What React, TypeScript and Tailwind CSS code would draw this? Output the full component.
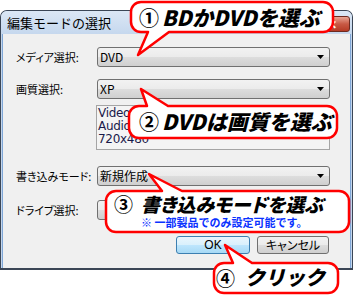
import React from "react";

const bubbles = [
  // ① top callout, tail points down-left
  "M141,2 H323 A10,10 0 0 1 333,12 V22 A10,10 0 0 1 323,32 H169 L138,55 L148,32 H141 A10,10 0 0 1 131,22 V12 A10,10 0 0 1 141,2 Z",
  // ② tail points up-left
  "M139,106 H147 L141,89 L168,106 H327 A10,10 0 0 1 337,116 V128 A10,10 0 0 1 327,138 H139 A10,10 0 0 1 129,128 V116 A10,10 0 0 1 139,106 Z",
  // ③
  "M116,191 H162 L149,174 L182,191 H339 A10,10 0 0 1 349,201 V222 A10,10 0 0 1 339,232 H116 A10,10 0 0 1 106,222 V201 A10,10 0 0 1 116,191 Z",
  // ④
  "M224,263 H233 L225,245 L252,263 H328 A10,10 0 0 1 338,273 V283 A10,10 0 0 1 328,293 H224 A10,10 0 0 1 214,283 V273 A10,10 0 0 1 224,263 Z",
];

function Combo({ value = "" }: { value?: string }) {
  return (
    <div className="relative h-[20px] w-[233px] rounded-[3px] border border-[#707070] bg-[linear-gradient(#f2f2f2_0%,#ebebeb_50%,#dddddd_51%,#cfcfcf_100%)] flex items-center pl-[2px] text-[12px] text-black">
      <span className="leading-none">{value}</span>
      {/* drop-down arrow */}
      <svg className="absolute right-[5px] top-[7px]" width="7" height="4" viewBox="0 0 7 4">
        <path d="M0 0 H7 L3.5 4 Z" fill="#000" />
      </svg>
    </div>
  );
}

function Row({ label, children }: { label: string; children: React.ReactNode }) {
  return (
    <div className="flex items-center">
      <div className="w-[81px] shrink-0 whitespace-nowrap text-[11px] leading-none text-black [font-feature-settings:'palt']">
        {label}
      </div>
      {children}
    </div>
  );
}

export default function App() {
  return (
    <div className="relative w-[353px] h-[295px] overflow-hidden bg-white font-['Noto_Sans_CJK_JP',sans-serif]">
      <div className="pt-[10px]">
        {/* window frame */}
        <div className="h-[260px] w-[353px] rounded-t-[7px] border border-b-2 border-[#3b4656] bg-[#c4d6ec] flex flex-col">
          {/* title bar */}
          <div className="h-[23px] flex items-center justify-between pl-[6px] pr-[2px] rounded-t-[6px] bg-[linear-gradient(#dbe7f5,#c6d8ee)]">
            <span className="text-[13px] leading-none text-black">編集モードの選択</span>
            <div className="h-[16px] w-[36px] mt-[3px] rounded-[3px] border border-[#6d2a20] bg-[linear-gradient(#e8a493,#c85a45_50%,#b53b25)] flex items-center justify-center">
              <span className="text-white text-[12px] font-bold leading-none">✕</span>
            </div>
          </div>
          {/* client area */}
          <div className="flex-1 mx-[1px] border-x border-[#7fa6d6] bg-[#f0f0f0] pl-[13px] pt-[13px] flex flex-col">
            <Row label="メディア選択:">
              <Combo value="DVD" />
            </Row>
            <div className="mt-[12px]">
              <Row label="画質選択:">
                <Combo value="XP" />
              </Row>
            </div>
            <div className="mt-[6px] ml-[80px] h-[45px] w-[234px] border border-[#a5a5a5] bg-[#f4f4f4] pl-[1px] pt-[1px] text-[12px] leading-[13px] text-[#1a1a4a] font-['DejaVu_Sans',sans-serif] tracking-[-0.3px]">
              <div>Video :</div>
              <div>Audio :</div>
              <div>720x480</div>
            </div>
            <div className="mt-[16px]">
              <Row label="書き込みモード:">
                <Combo value="新規作成" />
              </Row>
            </div>
            <div className="mt-[14px]">
              <Row label="ドライブ選択:">
                <Combo />
              </Row>
            </div>
            <div className="mt-[16px] pl-[160px] flex gap-[7px]">
              <div className="h-[18px] w-[74px] rounded-[3px] border border-[#3c7fb1] bg-[linear-gradient(#eaf6fd,#d9f0fc_50%,#bee6fd_51%,#a7d9f5)] flex items-center justify-center text-[12px] leading-none text-black font-['Liberation_Sans',sans-serif]">
                OK
              </div>
              <div className="h-[18px] w-[72px] rounded-[3px] border border-[#707070] bg-[linear-gradient(#f2f2f2,#ebebeb_50%,#dddddd_51%,#cfcfcf)] flex items-center justify-center text-[12px] leading-none text-black [font-feature-settings:'palt']">
                キャンセル
              </div>
            </div>
          </div>
        </div>
      </div>

      {/* callout bubbles */}
      <svg className="absolute inset-0" width="353" height="295" viewBox="0 0 353 295">
        {bubbles.map((d, i) => (
          <path key={i} d={d} fill="#fff" stroke="#ff0000" strokeWidth="2.5" strokeLinejoin="round" />
        ))}
      </svg>

      <div className="absolute left-[139px] top-[7px] flex items-center gap-[3px] text-black">
        <span className="text-[20px] leading-none font-bold">①</span>
        <span className="text-[21px] leading-none font-black italic">BDかDVDを選ぶ</span>
      </div>
      <div className="absolute left-[139px] top-[111px] flex items-center gap-[3px] text-black">
        <span className="text-[20px] leading-none font-bold">②</span>
        <span className="text-[21px] leading-none font-black italic">DVDは画質を選ぶ</span>
      </div>
      <div className="absolute left-[114px] top-[193px] flex flex-col text-black">
        <div className="h-[20px] flex items-center gap-[8px]">
          <span className="text-[19px] leading-none font-bold">③</span>
          <span className="text-[19px] leading-none font-black italic [font-feature-settings:'palt']">書き込みモードを選ぶ</span>
        </div>
        <div className="mt-[4px] ml-[27px] h-[11px] text-[11px] leading-[11px] font-bold text-[#0a32ff]">
          ※ 一部製品でのみ設定可能です。
        </div>
      </div>
      <div className="absolute left-[216px] top-[267px] flex items-center gap-[10px] text-black">
        <span className="text-[19px] leading-none font-bold">④</span>
        <span className="text-[20px] leading-none font-black italic">クリック</span>
      </div>
    </div>
  );
}
